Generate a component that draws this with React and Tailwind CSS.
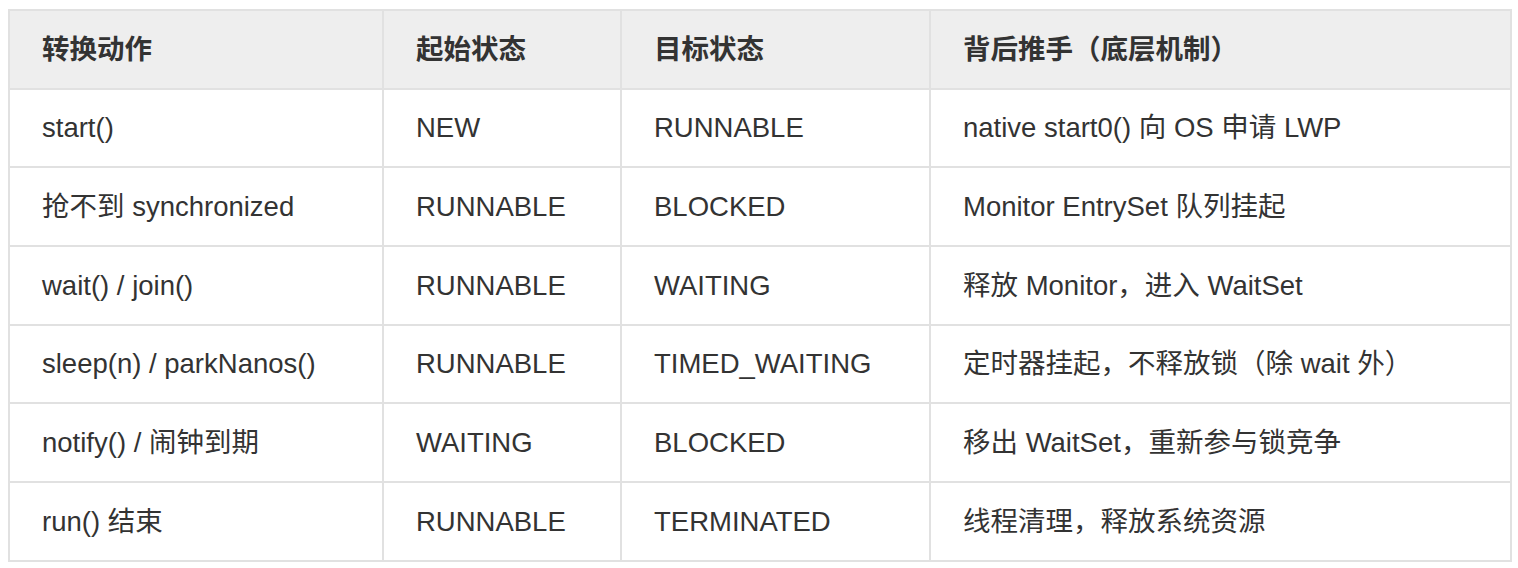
import React from 'react';

const headers = ['转换动作', '起始状态', '目标状态', '背后推手（底层机制）'];

const rows = [
  ['start()', 'NEW', 'RUNNABLE', 'native start0() 向 OS 申请 LWP'],
  ['抢不到 synchronized', 'RUNNABLE', 'BLOCKED', 'Monitor EntrySet 队列挂起'],
  ['wait() / join()', 'RUNNABLE', 'WAITING', '释放 Monitor，进入 WaitSet'],
  ['sleep(n) / parkNanos()', 'RUNNABLE', 'TIMED_WAITING', '定时器挂起，不释放锁（除 wait 外）'],
  ['notify() / 闹钟到期', 'WAITING', 'BLOCKED', '移出 WaitSet，重新参与锁竞争'],
  ['run() 结束', 'RUNNABLE', 'TERMINATED', '线程清理，释放系统资源'],
];

export default function App() {
  return (
    <div
      className="min-h-[568px] bg-white pt-[9px] pl-[8px] text-[#333333] text-[27.5px]"
      style={{ fontFamily: '"Liberation Sans", "Noto Sans CJK SC", sans-serif' }}
    >
      <div className="grid w-[1504px] grid-cols-[372px_236px_307px_579px] auto-rows-[76.7px] gap-[2px] bg-[#e1e1e1] p-[2px]">
        {headers.map((h) => (
          <div key={h} className="flex items-center bg-[#eeeeee] pl-[32px] font-bold">
            {h}
          </div>
        ))}
        {rows.map((row, i) =>
          row.map((cell, j) => (
            <div key={`${i}-${j}`} className="flex items-center bg-white pl-[32px]">
              {cell}
            </div>
          ))
        )}
      </div>
    </div>
  );
}
